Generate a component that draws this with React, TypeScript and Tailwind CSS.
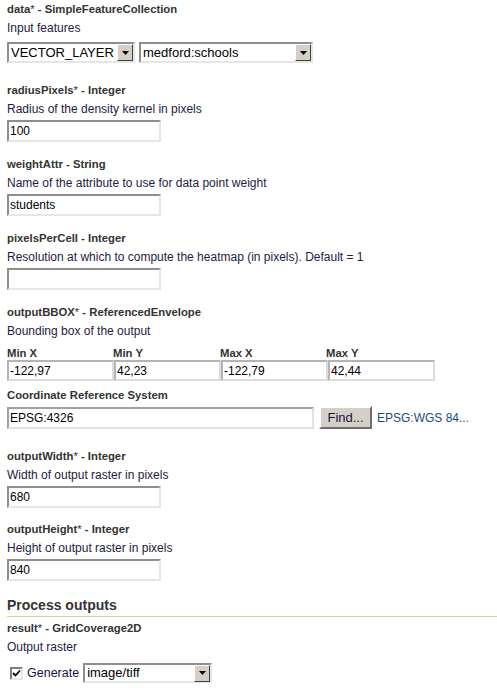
import React from "react";

const font = { fontFamily: '"Liberation Sans", Arial, sans-serif' };

const inset =
  "border-2 border-t-[#8e8e8e] border-l-[#8e8e8e] border-b-[#e6e6e6] border-r-[#e6e6e6] bg-white";

function Title({ name, req, type }: { name: string; req?: boolean; type: string }) {
  return (
    <div className="text-[11.3px] leading-[14px] font-bold text-[#333]">
      {name}
      {req ? <span className="font-normal">*</span> : null} - {type}
    </div>
  );
}

function Desc({ children }: { children: React.ReactNode }) {
  return <div className="mt-[4px] text-[12px] leading-[16px] text-[#231c3f]">{children}</div>;
}

function TextBox({ value, w = "w-[154px]" }: { value: string; w?: string }) {
  return (
    <div className={`${inset} ${w} h-[22px] flex items-center px-[1px] text-[12px] text-black`}>
      {value}
    </div>
  );
}

function Arrow() {
  return (
    <div className="w-[16px] h-[17px] bg-[#d4d0c8] border border-t-white border-l-white border-b-[#404040] border-r-[#404040] flex items-center justify-center">
      <svg width="7" height="4" viewBox="0 0 7 4">
        <path d="M0 0H7L3.5 4Z" fill="#000" />
      </svg>
    </div>
  );
}

function Select({ value, w, h = "h-[21px]" }: { value: string; w: string; h?: string }) {
  return (
    <div className={`${inset} ${w} ${h} flex items-center justify-between text-[13px] text-black`}>
      <span className="pl-[2px] leading-[16px]">{value}</span>
      <Arrow />
    </div>
  );
}

function Field({
  name,
  req,
  type,
  desc,
  value,
  className = "",
}: {
  name: string;
  req?: boolean;
  type: string;
  desc: string;
  value: string;
  className?: string;
}) {
  return (
    <div className={className}>
      <Title name={name} req={req} type={type} />
      <Desc>{desc}</Desc>
      <div className="mt-[3px]">
        <TextBox value={value} />
      </div>
    </div>
  );
}

export default function App() {
  return (
    <div className="w-[497px] h-[693px] bg-white overflow-hidden" style={font}>
      <div className="pl-[7px] pt-[2px]">
        <Title name="data" req type="SimpleFeatureCollection" />
        <Desc>Input features</Desc>
        <div className="mt-[6px] flex gap-[4px]">
          <Select value="VECTOR_LAYER" w="w-[128px]" />
          <Select value="medford:schools" w="w-[174px]" />
        </div>

        <Field
          className="mt-[20px]"
          name="radiusPixels"
          req
          type="Integer"
          desc="Radius of the density kernel in pixels"
          value="100"
        />
        <Field
          className="mt-[15px]"
          name="weightAttr"
          type="String"
          desc="Name of the attribute to use for data point weight"
          value="students"
        />
        <Field
          className="mt-[15px]"
          name="pixelsPerCell"
          type="Integer"
          desc="Resolution at which to compute the heatmap (in pixels). Default = 1"
          value=""
        />

        <div className="mt-[15px]">
          <Title name="outputBBOX" req type="ReferencedEnvelope" />
          <Desc>Bounding box of the output</Desc>
          <div className="mt-[7px] grid grid-cols-[106px_107px_106px_108px] text-[11.3px] leading-[14px] font-bold text-[#333]">
            <div>Min X</div>
            <div>Min Y</div>
            <div>Max X</div>
            <div>Max Y</div>
          </div>
          <div className="flex">
            {["-122,97", "42,23", "-122,79", "42,44"].map((v, i) => (
              <div
                key={i}
                className="w-[107px] h-[21px] border-2 border-t-[#b4b4b4] border-l-[#b4b4b4] border-b-[#dcdcdc] border-r-[#dcdcdc] flex items-center px-[1px] text-[12px] text-black"
              >
                {v}
              </div>
            ))}
          </div>
          <div className="mt-[7px] text-[11.3px] leading-[14px] font-bold text-[#333]">
            Coordinate Reference System
          </div>
          <div className="mt-[4px] flex items-center">
            <div className="w-[307px] h-[22px] border-2 border-t-[#a0a0a0] border-l-[#a0a0a0] border-b-[#e2e2e2] border-r-[#e2e2e2] flex items-center px-[1px] text-[12px] text-black">
              EPSG:4326
            </div>
            <div className="ml-[5px] w-[53px] h-[23px] bg-[#d4d0c8] border-2 border-t-white border-l-white border-b-[#6e6e6e] border-r-[#6e6e6e] flex items-center justify-center text-[13px] text-[#1a1140]">
              Find...
            </div>
            <div className="ml-[5px] text-[12px] text-[#1f4a7a]">EPSG:WGS 84...</div>
          </div>
        </div>

        <Field
          className="mt-[20px]"
          name="outputWidth"
          req
          type="Integer"
          desc="Width of output raster in pixels"
          value="680"
        />
        <Field
          className="mt-[14px]"
          name="outputHeight"
          req
          type="Integer"
          desc="Height of output raster in pixels"
          value="840"
        />

        <div className="mt-[15px] pb-[2px] border-b border-[#c3da9a] text-[14px] leading-[18px] font-bold text-[#333]">
          Process outputs
        </div>
        <div className="mt-[4px]">
          <Title name="result" req type="GridCoverage2D" />
          <Desc>Output raster</Desc>
          <div className="mt-[8px] flex items-center h-[20px]">
            <div className="ml-[3px] w-[13px] h-[13px] border-2 border-t-[#808080] border-l-[#808080] border-b-[#e6e6e6] border-r-[#e6e6e6] bg-white flex items-center justify-center">
              <svg width="9" height="9" viewBox="0 0 9 9">
                <path d="M1 4L3.5 6.5L8 1.5" fill="none" stroke="#000" strokeWidth="1.8" />
              </svg>
            </div>
            <span className="ml-[4px] text-[12.5px] text-[#1a1140]">Generate</span>
            <div className="ml-[4px]">
              <Select value="image/tiff" w="w-[129px]" h="h-[20px]" />
            </div>
          </div>
        </div>
      </div>
    </div>
  );
}
